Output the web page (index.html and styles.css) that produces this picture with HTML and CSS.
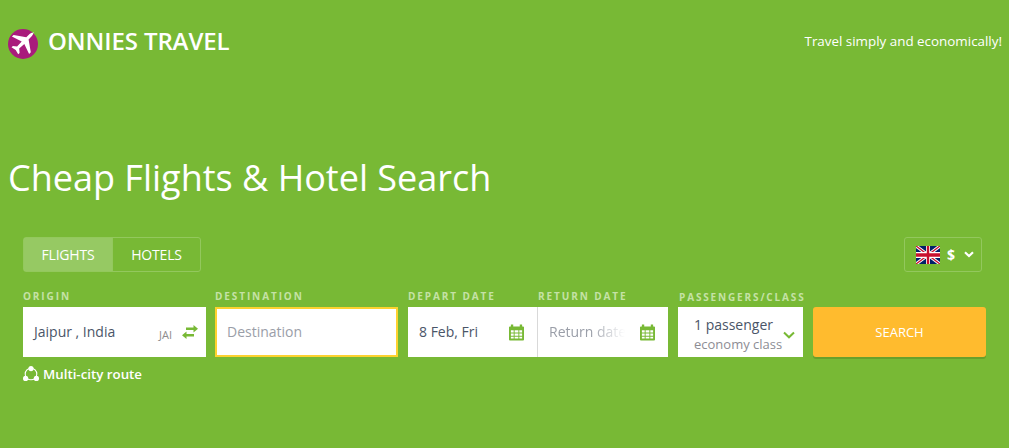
FILE: index.html
```html
<!DOCTYPE html>
<html lang="en">
<head>
<meta charset="utf-8">
<title>Onnies Travel</title>
<link rel="stylesheet" href="styles.css">
</head>
<body>
<header class="header">
  <div class="brand">
    <svg class="brand-icon" viewBox="0 0 30 30" aria-hidden="true">
      <circle cx="15" cy="15" r="15" fill="#a91b7c"/>
      <path fill="#fff" d="M26.5 4.200c-1.300-.9-3.400-.5-4.900.9l-3.300 3.100L5.600 5.900 3.900 7.500l9.800 4.900-4.600 5.100-4.200-.5-1.400 1.300 4.200 2.600 2.500 4.400 1.400-1.400-.4-4.300 5.100-4.700 4.800 10 1.700-1.700-2.200-12.800 3.300-3.400c1.400-1.500 1.800-3.300 1.100-4.200z"/>
    </svg>
    <span class="brand-name">ONNIES TRAVEL</span>
  </div>
  <p class="tagline">Travel simply and economically!</p>
</header>

<h1 class="headline">Cheap Flights &amp; Hotel Search</h1>

<section class="search">
  <div class="search-top">
    <div class="tabs">
      <span class="tab tab-active">FLIGHTS</span>
      <span class="tab">HOTELS</span>
    </div>
    <div class="currency">
      <svg class="flag" viewBox="0 0 60 30" preserveAspectRatio="none" aria-hidden="true">
        <rect width="60" height="30" fill="#012169"/>
        <path d="M0 0L60 30M60 0L0 30" stroke="#fff" stroke-width="6"/>
        <path d="M0 0L60 30M60 0L0 30" stroke="#c8102e" stroke-width="2.500"/>
        <path d="M30 0V30M0 15H60" stroke="#fff" stroke-width="10"/>
        <path d="M30 0V30M0 15H60" stroke="#c8102e" stroke-width="6"/>
      </svg>
      <span class="currency-sign">$</span>
      <svg class="currency-chevron" viewBox="0 0 10 7" aria-hidden="true">
        <path d="M1 1.300L5 5l4-3.700" fill="none" stroke="#fff" stroke-width="2.200"/>
      </svg>
    </div>
  </div>

  <div class="fields">
    <div class="field field-origin">
      <label class="field-label">ORIGIN</label>
      <div class="box box-origin">
        <span class="value">Jaipur , India</span>
        <span class="code">JAI</span>
        <svg class="swap" viewBox="0 0 16 14" aria-hidden="true">
          <path fill="#78b935" d="M4 2.400h7.500V0L16 3.700l-4.500 3.700V5H4zM12 9H4.500V6.600L0 10.300 4.500 14v-2.400H12z"/>
        </svg>
      </div>
    </div>
    <div class="field field-destination">
      <label class="field-label">DESTINATION</label>
      <div class="box box-destination">
        <span class="placeholder">Destination</span>
      </div>
    </div>
    <div class="field field-date">
      <label class="field-label">DEPART DATE</label>
      <div class="box box-date box-depart">
        <span class="value">8 Feb, Fri</span>
        <svg class="calendar" viewBox="0 0 16 17" aria-hidden="true">
          <path fill="#78b935" fill-rule="evenodd" d="M2 0h2.500v2h7V0H14v2h1a1 1 0 0 1 1 1v13a1 1 0 0 1-1 1H1a1 1 0 0 1-1-1V3a1 1 0 0 1 1-1h1zM2 6v2.500h3V6zm4 0v2.500h4V6zm5 0v2.500h3V6zM2 9.500V12h3V9.500zm4 0V12h4V9.500zm5 0V12h3V9.500zM2 13v2h3v-2zm4 0v2h4v-2zm5 0v2h3v-2z"/>
        </svg>
      </div>
    </div>
    <div class="field field-date">
      <label class="field-label">RETURN DATE</label>
      <div class="box box-date">
        <span class="placeholder placeholder-fade">Return date</span>
        <svg class="calendar" viewBox="0 0 16 17" aria-hidden="true">
          <path fill="#78b935" fill-rule="evenodd" d="M2 0h2.500v2h7V0H14v2h1a1 1 0 0 1 1 1v13a1 1 0 0 1-1 1H1a1 1 0 0 1-1-1V3a1 1 0 0 1 1-1h1zM2 6v2.500h3V6zm4 0v2.500h4V6zm5 0v2.500h3V6zM2 9.500V12h3V9.500zm4 0V12h4V9.500zm5 0V12h3V9.500zM2 13v2h3v-2zm4 0v2h4v-2zm5 0v2h3v-2z"/>
        </svg>
      </div>
    </div>
    <div class="field field-passengers">
      <label class="field-label">PASSENGERS/CLASS</label>
      <div class="box box-passengers">
        <div class="passenger-text">
          <span class="passenger-count">1 passenger</span>
          <span class="passenger-class">economy class</span>
        </div>
        <svg class="passenger-chevron" viewBox="0 0 12 8" aria-hidden="true">
          <path d="M1 1.500L6 6.300l5-4.800" fill="none" stroke="#78b935" stroke-width="2"/>
        </svg>
      </div>
    </div>
    <button class="search-button" type="button">SEARCH</button>
  </div>

  <a class="multi-city" href="#">
    <svg class="multi-icon" viewBox="0 0 16 16" aria-hidden="true">
      <circle cx="8" cy="8" r="5.800" fill="none" stroke="#fff" stroke-width="1.100"/>
      <circle cx="8" cy="2.600" r="2.600" fill="#fff"/>
      <circle cx="2.600" cy="12.400" r="2.600" fill="#fff"/>
      <circle cx="13.400" cy="12.400" r="2.600" fill="#fff"/>
    </svg>
    <span>Multi-city route</span>
  </a>
</section>
</body>
</html>
```

FILE: styles.css
```css
* {
  box-sizing: border-box;
}

html,
body {
  height: 100%;
}

body {
  margin: 0;
  background: #78b935;
  color: #fff;
  font-family: "Open Sans", "Liberation Sans", sans-serif;
  overflow: hidden;
}

.header {
  display: flex;
  justify-content: space-between;
  align-items: center;
  padding: 29px 7px 0 8px;
  height: 59px;
}

.brand {
  display: flex;
  align-items: center;
  gap: 10px;
}

.brand-icon {
  width: 30px;
  height: 30px;
  display: block;
}

.brand-name {
  margin-bottom: 6px;
  font-size: 24px;
  font-weight: 600;
  line-height: 26px;
  letter-spacing: -0.1px;
}

.tagline {
  margin: 0 0 6px;
  font-size: 13.4px;
  line-height: 20px;
}

.headline {
  margin: 97px 0 0 8px;
  font-size: 36px;
  font-weight: 400;
  line-height: 44px;
}

.search {
  width: 986px;
  margin-top: 37px;
  padding-left: 23px;
}

.search-top {
  display: flex;
  justify-content: space-between;
  padding-right: 4px;
  height: 35px;
}

.tabs {
  display: flex;
  border: 1px solid #93c85d;
  border-radius: 3px;
}

.tab {
  display: flex;
  align-items: center;
  justify-content: center;
  width: 87px;
  font-size: 14px;
  letter-spacing: -0.2px;
}

.tab-active {
  width: 89px;
  background: #96c963;
  border-right: 1px solid #93c85d;
}

.currency {
  display: flex;
  align-items: center;
  width: 78px;
  padding-left: 11px;
  border: 1px solid #93c85d;
  border-radius: 3px;
}

.flag {
  width: 24px;
  height: 18px;
  display: block;
}

.currency-sign {
  margin-left: 7px;
  font-size: 14px;
  font-weight: 700;
}

.currency-chevron {
  width: 10px;
  height: 7px;
  margin-left: 9px;
}

.fields {
  display: flex;
  align-items: flex-end;
  margin-top: 17px;
}

.field {
  display: flex;
  flex-direction: column;
}

.field-label {
  height: 18px;
  font-size: 10px;
  font-weight: 700;
  line-height: 14px;
  letter-spacing: 1.9px;
  color: #c5e2a6;
  white-space: nowrap;
}

.field-passengers .field-label {
  padding-left: 1px;
  line-height: 16px;
  letter-spacing: 1.85px;
}

.box {
  display: flex;
  align-items: center;
  height: 50px;
  background: #fff;
  color: #4a5568;
  font-size: 14px;
}

.value,
.placeholder {
  margin-bottom: 2px;
}

.field-origin {
  width: 183px;
}

.box-origin {
  padding: 0 8px 0 11px;
}

.box-origin .value {
  flex: 1;
}

.code {
  font-size: 11px;
  color: #8d8d8d;
  margin-right: 10px;
  margin-top: 5px;
}

.swap {
  width: 16px;
  height: 14px;
}

.field-destination {
  width: 183px;
  margin-left: 9px;
}

.box-destination {
  padding-left: 10px;
  border: 2px solid #fdd22f;
}

.placeholder {
  color: #9a9ea8;
  white-space: nowrap;
  overflow: hidden;
}

.placeholder-fade {
  width: 76px;
  flex: none;
  -webkit-mask-image: linear-gradient(to right, #000 55%, transparent 100%);
  mask-image: linear-gradient(to right, #000 55%, transparent 100%);
}

.field-date {
  width: 130px;
}

.field-destination + .field-date {
  margin-left: 10px;
}

.box-date {
  justify-content: space-between;
  padding: 0 13px 0 11px;
}

.box-depart {
  border-right: 1px solid #d9d9d9;
}

.calendar {
  width: 15px;
  height: 17px;
}

.field-passengers {
  width: 125px;
  margin-left: 10px;
}

.box-passengers {
  position: relative;
  padding: 3px 0 0 16px;
}

.passenger-text {
  display: flex;
  flex-direction: column;
}

.passenger-count {
  line-height: 20px;
}

.passenger-class {
  font-size: 13px;
  line-height: 18px;
  color: #8d8d94;
}

.passenger-chevron {
  position: absolute;
  right: 8px;
  top: 24px;
  width: 12px;
  height: 8px;
}

.search-button {
  width: 173px;
  height: 50px;
  margin-left: 10px;
  border: 0;
  border-radius: 3px;
  background: #ffbb2e;
  box-shadow: 0 2px 0 #68a02c;
  color: #fff;
  font-family: inherit;
  font-size: 13px;
  font-weight: 400;
}

.multi-city {
  display: flex;
  align-items: center;
  gap: 4px;
  margin-top: 8px;
  color: #fff;
  font-size: 13.3px;
  font-weight: 600;
  line-height: 18px;
  text-decoration: none;
}

.multi-icon {
  width: 16px;
  height: 16px;
}
```
